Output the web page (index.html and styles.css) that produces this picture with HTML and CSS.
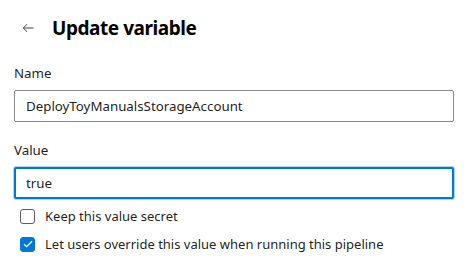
FILE: index.html
```html
<!DOCTYPE html>
<html lang="en">
<head>
  <meta charset="UTF-8">
  <title>Update variable</title>
  <link rel="stylesheet" href="styles.css">
</head>
<body>
  <div class="panel">
    <div class="panel-header">
      <button class="back-btn" aria-label="Back">
        <svg width="12" height="10" viewBox="0 0 12 10">
          <path d="M11.5 5H1.5M5 1.2L1.2 5L5 8.8" fill="none" stroke="#444" stroke-width="1"/>
        </svg>
      </button>
      <h2 class="title">Update variable</h2>
    </div>

    <div class="field">
      <label class="field-label" for="var-name">Name</label>
      <input type="text" id="var-name" class="text-input" value="DeployToyManualsStorageAccount">
    </div>

    <div class="field value-field">
      <label class="field-label" for="var-value">Value</label>
      <input type="text" id="var-value" class="text-input focused" value="true">
    </div>

    <div class="options">
      <label class="option">
        <span class="checkbox"></span>
        Keep this value secret
      </label>
      <label class="option">
        <span class="checkbox checked">
          <svg width="10" height="8" viewBox="0 0 10 8">
            <path d="M1 4.2l2.6 2.5L9 1.2" fill="none" stroke="#fff" stroke-width="1.3"/>
          </svg>
        </span>
        Let users override this value when running this pipeline
      </label>
    </div>
  </div>
</body>
</html>
```

FILE: styles.css
```css
/* ---------- base ---------- */
*{box-sizing:border-box;margin:0;padding:0;}

body{
  font-family:"Noto Sans","Open Sans",sans-serif;
  background:#fff;
  color:rgba(0,0,0,.9);
  font-size:13.3px;
}

.panel{
  padding:0 10px 0 14px;
}

/* ---------- header ---------- */
.panel-header{
  display:flex;
  align-items:center;
  height:56px;
}

.back-btn{
  display:flex;
  align-items:center;
  justify-content:center;
  border:none;
  background:none;
  width:24px;
  height:24px;
  margin-left:2px;
  margin-right:12px;
}

.title{
  font-size:19px;
  font-weight:700;
  line-height:28px;
  color:#000;
  letter-spacing:-.45px;
}

/* ---------- fields ---------- */
.field{
  display:flex;
  flex-direction:column;
  margin-top:7px;
}

.value-field{margin-top:18px;}

.field-label{
  line-height:20px;
  margin-bottom:7px;
}

.text-input{
  font-family:inherit;
  font-size:13.3px;
  color:rgba(0,0,0,.9);
  height:32px;
  width:440px;
  padding:0 11px;
  border:1px solid #8a8886;
  border-radius:2px;
  outline:none;
  background:#fff;
}

.text-input.focused{
  border:2px solid #0078d4;
  padding:0 10px;
  box-shadow:0 0 0 1px rgba(0,120,212,.3);
}

/* ---------- checkboxes ---------- */
.options{
  margin-top:3px;
  font-size:13px;
}

.option{
  display:flex;
  align-items:center;
  height:28px;
  padding-left:6px;
}

.checkbox{
  width:15px;
  height:15px;
  border:1px solid #605e5c;
  border-radius:3px;
  margin-right:10px;
  display:flex;
  align-items:center;
  justify-content:center;
}

.checkbox.checked{
  background:#0078d4;
  border-color:#0078d4;
}
```
